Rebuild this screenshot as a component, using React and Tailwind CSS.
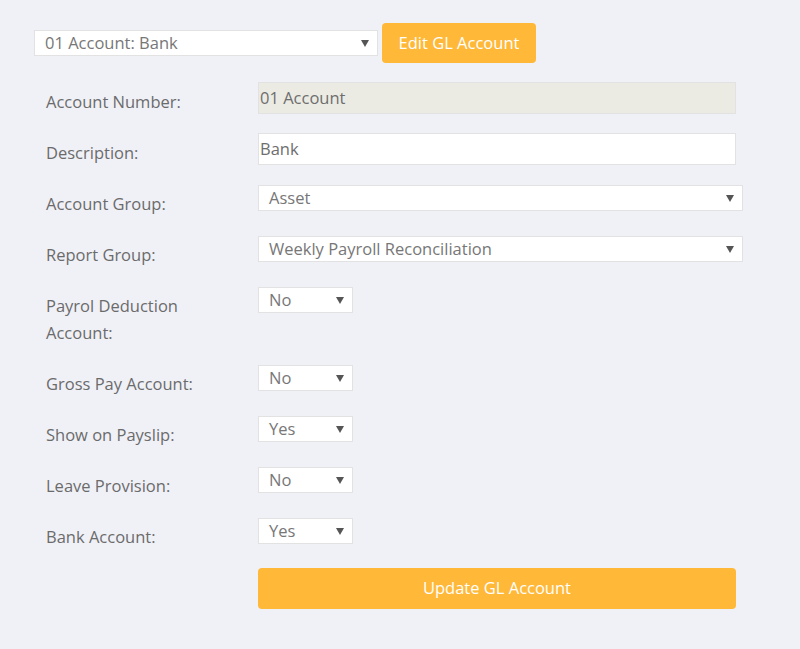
import React from "react";

const font = { fontFamily: '"Open Sans", "Liberation Sans", sans-serif' };

function Arrow() {
  return (
    <span className="ml-auto h-0 w-0 border-x-[4px] border-t-[7px] border-x-transparent border-t-[#555]" />
  );
}

function Select({ value, width, className = "" }) {
  return (
    <div
      className={`flex h-[26px] items-center border border-[#e2e2e2] bg-white pl-[10px] pr-[8px] text-[16.5px] text-[#777] ${width} ${className}`}
    >
      <span className="leading-none">{value}</span>
      <Arrow />
    </div>
  );
}

function Input({ value, disabled }) {
  return (
    <div
      className={`flex h-[32px] w-[478px] items-center border border-[#e2e2e2] px-px text-[16.5px] text-[#6e6e6e] ${
        disabled ? "bg-[#ebebe4]" : "bg-white"
      }`}
    >
      {value}
    </div>
  );
}

function Row({ label, children }) {
  return (
    <div className="flex items-start pb-[19px]">
      <div className="w-[212px] pt-[5px] text-[16.5px] leading-[27px] text-[#6b6b6b]">
        {label}
      </div>
      <div>{children}</div>
    </div>
  );
}

const yesNo = [
  ["Gross Pay Account:", "No"],
  ["Show on Payslip:", "Yes"],
  ["Leave Provision:", "No"],
  ["Bank Account:", "Yes"],
];

export default function App() {
  return (
    <div className="min-h-[649px] w-[800px] bg-[#f0f1f7]" style={font}>
      <div className="flex items-center gap-[4px] pl-[34px] pt-[23px]">
        <Select value="01 Account: Bank" width="w-[344px]" />
        <button className="h-[40px] w-[154px] rounded-[4px] bg-[#ffb838] text-[16.5px] text-white">
          Edit GL Account
        </button>
      </div>

      <div className="pl-[46px] pt-[21px]">
        <div className="-mt-px">
          <Row label="Account Number:">
            <div className="-mt-px">
              <Input value="01 Account" disabled />
            </div>
          </Row>
          <Row label="Description:">
            <div className="-mt-px">
              <Input value="Bank" />
            </div>
          </Row>
          <Row label="Account Group:">
            <Select value="Asset" width="w-[485px]" />
          </Row>
          <Row label="Report Group:">
            <Select value="Weekly Payroll Reconciliation" width="w-[485px]" />
          </Row>
          <Row
            label={
              <>
                Payrol Deduction
                <br />
                Account:
              </>
            }
          >
            <Select value="No" width="w-[95px]" />
          </Row>
          {yesNo.map(([label, value]) => (
            <Row key={label} label={label}>
              <Select value={value} width="w-[95px]" />
            </Row>
          ))}
        </div>
        <div className="-mt-px pl-[212px]">
          <button className="h-[41px] w-[478px] rounded-[4px] bg-[#ffb838] text-[16.5px] text-white">
            Update GL Account
          </button>
        </div>
      </div>
    </div>
  );
}
